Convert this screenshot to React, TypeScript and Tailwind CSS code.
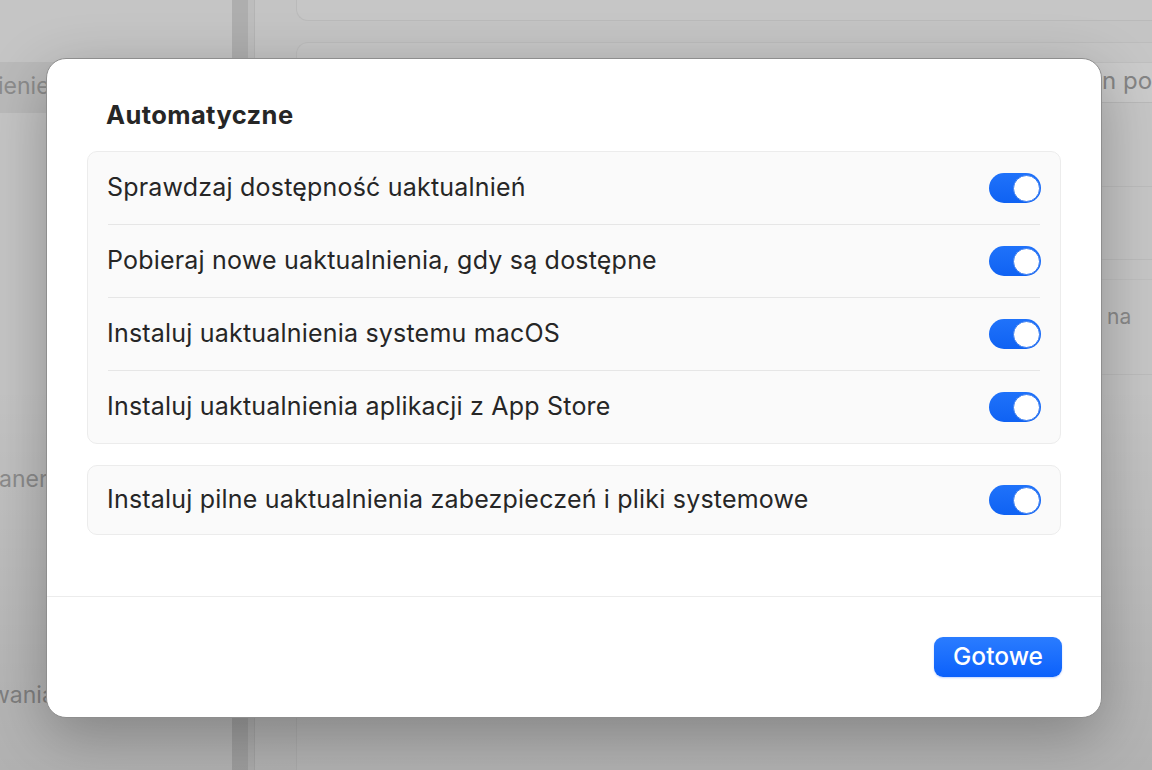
import React from "react";

const font = { fontFamily: "Inter, 'Noto Sans', 'Liberation Sans', sans-serif" };

function Toggle() {
  return (
    <div className="w-[52px] h-[30px] rounded-full bg-gradient-to-b from-[#1f72fa] to-[#0f62f3] flex items-center justify-end pr-[1.5px] shrink-0">
      <div className="w-[27px] h-[27px] rounded-full bg-white border border-[#3d7ff0]" />
    </div>
  );
}

function Row({ label }: { label: string }) {
  return (
    <div className="h-[72px] flex items-center justify-between px-[19px] pr-[19px]">
      <span className="text-[25px] text-[#262626] tracking-[0.2px]">{label}</span>
      <Toggle />
    </div>
  );
}

function Sep() {
  return <div className="h-px bg-[#e6e6e6] mx-[20px]" />;
}

export default function App() {
  return (
    <div className="relative w-[1152px] h-[770px] overflow-hidden bg-[#c3c3c3]" style={font}>
      {/* background window (dimmed) */}
      <div className="absolute inset-0 flex">
        <div className="w-[232px] shrink-0 flex flex-col bg-[#c5c5c5] overflow-hidden whitespace-nowrap">
          <div className="h-[62px] shrink-0" />
          <div className="h-[51px] shrink-0 bg-[#bababa] flex items-center text-[23px] text-[#8c8c8c] pb-[2px]">
            <span className="ml-[-2px]">ienie</span>
          </div>
          <div className="h-[346px] shrink-0" />
          <div className="h-[40px] shrink-0 flex items-center text-[23px] text-[#8f8f8f]">
            <span className="ml-[-1px]">aner</span>
          </div>
          <div className="h-[176px] shrink-0" />
          <div className="h-[40px] shrink-0 flex items-center text-[23px] text-[#8a8a8a]">
            <span className="ml-[-9px]">wania</span>
          </div>
        </div>
        <div className="w-[16px] shrink-0 bg-[#aeaeae]" />
        <div className="w-[7px] shrink-0 bg-[#bdbdbd] border-r border-[#b4b4b4]" />
        <div className="flex-1 min-w-0 overflow-hidden flex flex-col bg-[#c4c4c4] pl-[41px]">
          <div className="h-[21px] shrink-0 rounded-bl-[12px] border-l border-b border-[#bababa] bg-[#c6c6c6]" />
          <div className="h-[21px] shrink-0" />
          <div className="rounded-tl-[12px] border-l border-t border-[#bcbcbc] bg-[#c6c6c6] flex flex-col">
            <div className="h-[20px] border-b border-[#bfbfbf]" />
            <div className="h-[40px] bg-[#cbcbcb] border-b border-[#b9b9b9] flex items-center text-[24px] text-[#858585] pl-[805px] pb-[4px] whitespace-nowrap">
              <span>n por</span>
            </div>
            <div className="h-[84px] border-b border-[#bcbcbc]" />
            <div className="h-[73px] border-b border-[#bcbcbc]" />
            <div className="h-[20px] border-b border-[#bfbfbf]" />
            <div className="h-[95px] border-b border-[#bcbcbc] flex items-center text-[21px] text-[#8a8a8a] pl-[810px] pb-[20px]">na</div>
            <div className="h-[400px]" />
          </div>
        </div>
      </div>
      {/* shadow gradient */}
      <div className="absolute inset-0 bg-gradient-to-b from-transparent via-transparent to-[rgba(0,0,0,0.1)]" />

      {/* dialog */}
      <div className="absolute left-[46px] top-[58px] w-[1056px] h-[660px] rounded-[20px] bg-white border border-[#8e8e8e] shadow-[0_18px_60px_rgba(0,0,0,0.28)] flex flex-col overflow-hidden">
        <div className="flex-1 flex flex-col px-[40px] pt-[42px]">
          <div className="h-[28px] flex items-center pl-[19px] text-[25.5px] font-bold text-[#262626] tracking-[0.4px]">
            Automatyczne
          </div>
          <div className="mt-[22px] rounded-[10px] bg-[#fafafa] border border-[#ececec] flex flex-col">
            <Row label="Sprawdzaj dostępność uaktualnień" />
            <Sep />
            <Row label="Pobieraj nowe uaktualnienia, gdy są dostępne" />
            <Sep />
            <Row label="Instaluj uaktualnienia systemu macOS" />
            <Sep />
            <Row label="Instaluj uaktualnienia aplikacji z App Store" />
          </div>
          <div className="mt-[21px] rounded-[10px] bg-[#fafafa] border border-[#ececec] flex flex-col">
            <div className="h-[68px] flex items-center justify-between px-[19px] pr-[19px]">
              <span className="text-[25px] text-[#262626] tracking-[0.2px]">
                Instaluj pilne uaktualnienia zabezpieczeń i pliki systemowe
              </span>
              <Toggle />
            </div>
          </div>
        </div>
        <div className="h-px bg-[#ececec]" />
        <div className="h-[120px] flex items-center justify-end pr-[39px]">
          <button className="w-[128px] h-[40px] rounded-[9px] bg-gradient-to-b from-[#2a7cff] to-[#0a60fb] text-white text-[24.5px] font-medium shadow-[0_1px_2px_rgba(0,80,255,0.25)] pb-[2px]">
            Gotowe
          </button>
        </div>
      </div>
    </div>
  );
}
